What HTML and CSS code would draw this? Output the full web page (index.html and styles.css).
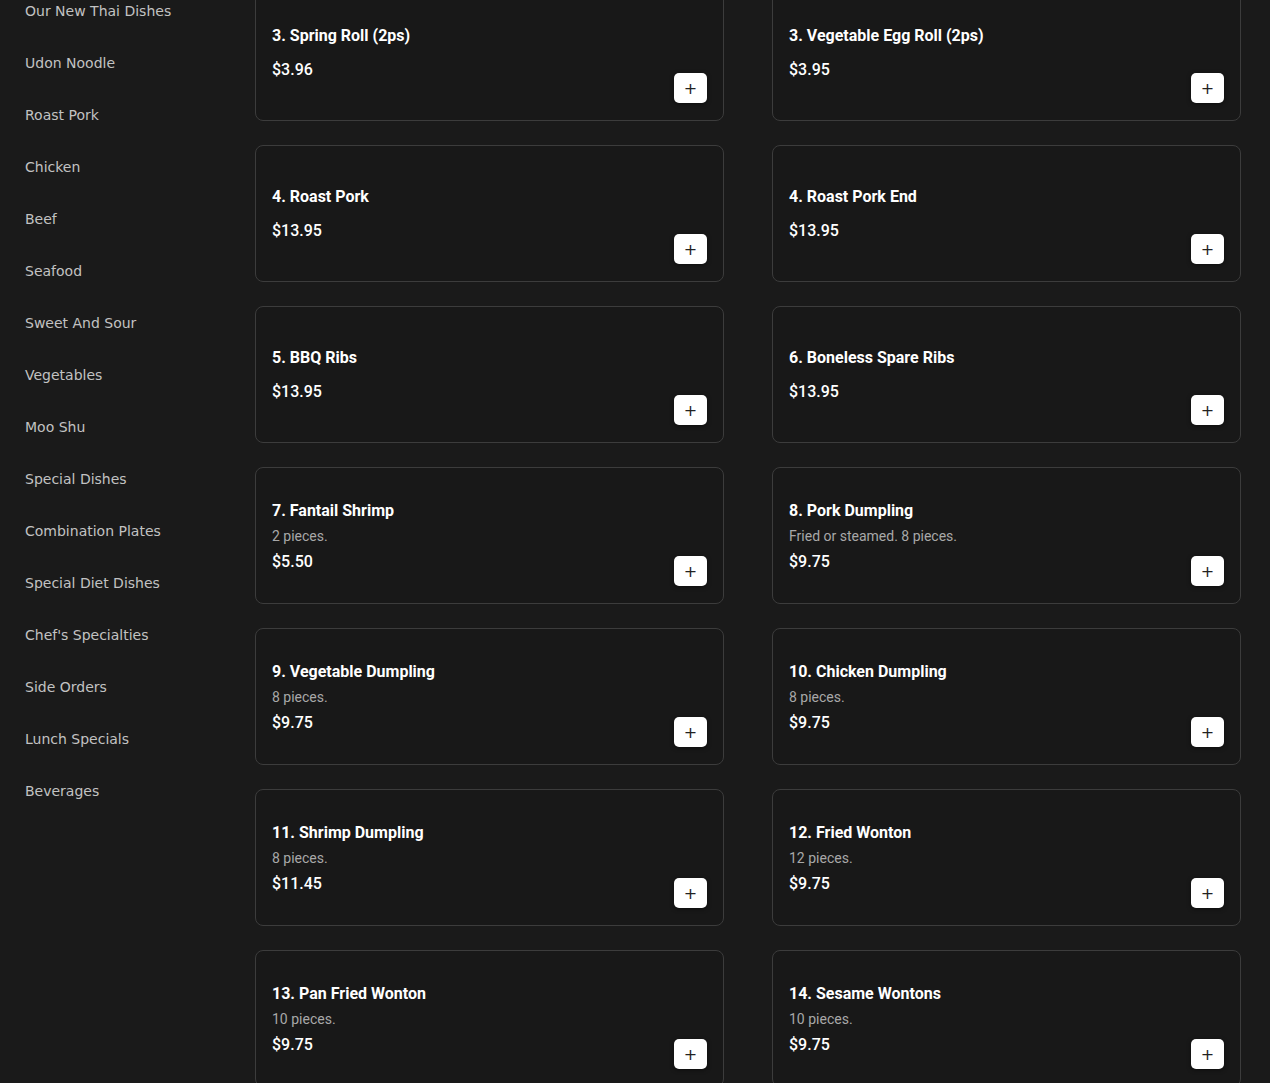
FILE: index.html
```html
<!DOCTYPE html>
<html lang="en">
<head>
<meta charset="utf-8">
<title>Menu</title>
<link rel="stylesheet" href="styles.css">
</head>
<body>
<div class="page">
  <nav class="sidebar">
    <a class="cat">Our New Thai Dishes</a>
    <a class="cat">Udon Noodle</a>
    <a class="cat">Roast Pork</a>
    <a class="cat">Chicken</a>
    <a class="cat">Beef</a>
    <a class="cat">Seafood</a>
    <a class="cat">Sweet And Sour</a>
    <a class="cat">Vegetables</a>
    <a class="cat">Moo Shu</a>
    <a class="cat">Special Dishes</a>
    <a class="cat">Combination Plates</a>
    <a class="cat">Special Diet Dishes</a>
    <a class="cat">Chef's Specialties</a>
    <a class="cat">Side Orders</a>
    <a class="cat">Lunch Specials</a>
    <a class="cat">Beverages</a>
  </nav>
  <main class="grid">
    <div class="card"><div class="info"><div class="title">3. Spring Roll (2ps)</div><div class="price">$3.96</div></div><button class="add">+</button></div>
    <div class="card"><div class="info"><div class="title">3. Vegetable Egg Roll (2ps)</div><div class="price">$3.95</div></div><button class="add">+</button></div>
    <div class="card"><div class="info"><div class="title">4. Roast Pork</div><div class="price">$13.95</div></div><button class="add">+</button></div>
    <div class="card"><div class="info"><div class="title">4. Roast Pork End</div><div class="price">$13.95</div></div><button class="add">+</button></div>
    <div class="card"><div class="info"><div class="title">5. BBQ Ribs</div><div class="price">$13.95</div></div><button class="add">+</button></div>
    <div class="card"><div class="info"><div class="title">6. Boneless Spare Ribs</div><div class="price">$13.95</div></div><button class="add">+</button></div>
    <div class="card"><div class="info with-desc"><div class="title">7. Fantail Shrimp</div><div class="desc">2 pieces.</div><div class="price">$5.50</div></div><button class="add">+</button></div>
    <div class="card"><div class="info with-desc"><div class="title">8. Pork Dumpling</div><div class="desc">Fried or steamed. 8 pieces.</div><div class="price">$9.75</div></div><button class="add">+</button></div>
    <div class="card"><div class="info with-desc"><div class="title">9. Vegetable Dumpling</div><div class="desc">8 pieces.</div><div class="price">$9.75</div></div><button class="add">+</button></div>
    <div class="card"><div class="info with-desc"><div class="title">10. Chicken Dumpling</div><div class="desc">8 pieces.</div><div class="price">$9.75</div></div><button class="add">+</button></div>
    <div class="card"><div class="info with-desc"><div class="title">11. Shrimp Dumpling</div><div class="desc">8 pieces.</div><div class="price">$11.45</div></div><button class="add">+</button></div>
    <div class="card"><div class="info with-desc"><div class="title">12. Fried Wonton</div><div class="desc">12 pieces.</div><div class="price">$9.75</div></div><button class="add">+</button></div>
    <div class="card"><div class="info with-desc"><div class="title">13. Pan Fried Wonton</div><div class="desc">10 pieces.</div><div class="price">$9.75</div></div><button class="add">+</button></div>
    <div class="card"><div class="info with-desc"><div class="title">14. Sesame Wontons</div><div class="desc">10 pieces.</div><div class="price">$9.75</div></div><button class="add">+</button></div>
  </main>
</div>
</body>
</html>
```

FILE: styles.css
```css
html, body {
  margin: 0;
  padding: 0;
  background: #1a1a1a;
  height: 1083px;
  overflow: hidden;
}

.page {
  display: flex;
  align-items: flex-start;
  margin-top: -16px;
}

.sidebar {
  width: 205px;
  padding-left: 25px;
  padding-top: 1px;
  display: flex;
  flex-direction: column;
  flex-shrink: 0;
}

.cat {
  font-family: "DejaVu Sans", sans-serif;
  font-size: 14px;
  line-height: 20px;
  padding: 16px 0;
  color: #c2c2c2;
  white-space: nowrap;
}

.grid {
  flex: 1;
  padding: 0 29px 0 25px;
  display: grid;
  grid-template-columns: 1fr 1fr;
  column-gap: 48px;
  row-gap: 24px;
}

.card {
  box-sizing: border-box;
  height: 137px;
  border: 1px solid #3c3c3c;
  border-radius: 8px;
  background: #181818;
  padding: 16px;
  display: flex;
  align-items: flex-end;
  justify-content: space-between;
  font-family: Roboto, "Liberation Sans", sans-serif;
}

.info {
  align-self: center;
  display: flex;
  flex-direction: column;
}

.info.with-desc {
  padding-top: 2px;
}

.title {
  font-size: 16px;
  font-weight: 700;
  line-height: 24px;
  color: #ffffff;
  margin-bottom: 4px;
}

.with-desc .title {
  margin-bottom: 3px;
}

.desc {
  font-size: 14px;
  line-height: 20px;
  color: #a8a8a8;
}

.price {
  font-size: 16px;
  font-weight: 500;
  line-height: 24px;
  color: #ffffff;
  margin-top: 6px;
}

.desc + .price {
  margin-top: 4px;
}

.add {
  width: 33px;
  height: 30px;
  border: none;
  border-radius: 5px;
  background: #ffffff;
  color: #222222;
  font-family: "DejaVu Sans", sans-serif;
  font-size: 16px;
  line-height: 32px;
  padding: 0;
  box-shadow: 0 1px 4px rgba(0, 0, 0, 0.5);
  margin-bottom: 1px;
}
```
